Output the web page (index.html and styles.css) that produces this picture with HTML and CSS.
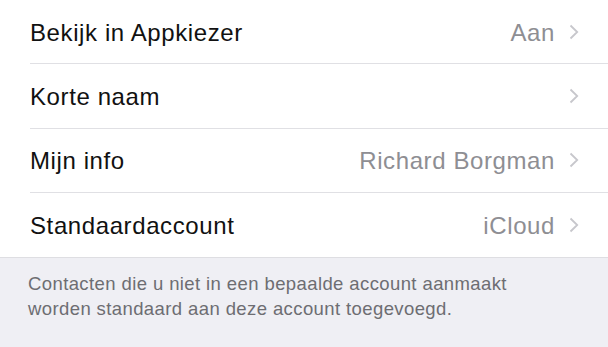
FILE: index.html
```html
<!DOCTYPE html>
<html lang="nl">
<head>
<meta charset="utf-8">
<title>Contacten</title>
<link rel="stylesheet" href="styles.css">
</head>
<body>
<div class="group">
  <div class="row"><div class="cell"><span class="label">Bekijk in Appkiezer</span><span class="value">Aan</span><svg class="chev" width="10" height="16" viewBox="0 0 10 16"><path d="M1.5 1.5 L8.2 8 L1.5 14.5" fill="none" stroke="#c7c7cc" stroke-width="1.8"/></svg></div></div>
  <div class="row"><div class="cell"><span class="label">Korte naam</span><span class="value"></span><svg class="chev" width="10" height="16" viewBox="0 0 10 16"><path d="M1.5 1.5 L8.2 8 L1.5 14.5" fill="none" stroke="#c7c7cc" stroke-width="1.8"/></svg></div></div>
  <div class="row"><div class="cell"><span class="label">Mijn info</span><span class="value">Richard Borgman</span><svg class="chev" width="10" height="16" viewBox="0 0 10 16"><path d="M1.5 1.5 L8.2 8 L1.5 14.5" fill="none" stroke="#c7c7cc" stroke-width="1.8"/></svg></div></div>
  <div class="row last"><div class="cell"><span class="label">Standaardaccount</span><span class="value">iCloud</span><svg class="chev" width="10" height="16" viewBox="0 0 10 16"><path d="M1.5 1.5 L8.2 8 L1.5 14.5" fill="none" stroke="#c7c7cc" stroke-width="1.8"/></svg></div></div>
</div>
<div class="footer">Contacten die u niet in een bepaalde account aanmaakt<br>worden standaard aan deze account toegevoegd.</div>
</body>
</html>
```
FILE: styles.css
```css
html, body {
  margin: 0;
  padding: 0;
  background: #efeff4;
  font-family: "Liberation Sans", Arial, sans-serif;
  height: 100%;
}
.group {
  background: #fff;
  border-bottom: 1px solid #dedee2;
}
.row {
  padding-left: 30px;
}
.cell {
  box-sizing: border-box;
  height: 64.25px;
  display: flex;
  align-items: center;
  padding-right: 29px;
  padding-top: 2px;
  border-bottom: 1px solid #e0e0e4;
}
.row.last .cell {
  border-bottom: none;
}
.label {
  flex: 1;
  font-size: 24px;
  letter-spacing: 0.6px;
  color: #111;
}
.value {
  font-size: 24px;
  letter-spacing: 0.6px;
  color: #8e8e93;
  margin-right: 14px;
}
.chev {
  display: block;
  margin-top: -2px;
}
.footer {
  padding: 13px 30px 0 28px;
  font-size: 18.5px;
  letter-spacing: 0.4px;
  line-height: 25px;
  color: #6d6d72;
}
```
